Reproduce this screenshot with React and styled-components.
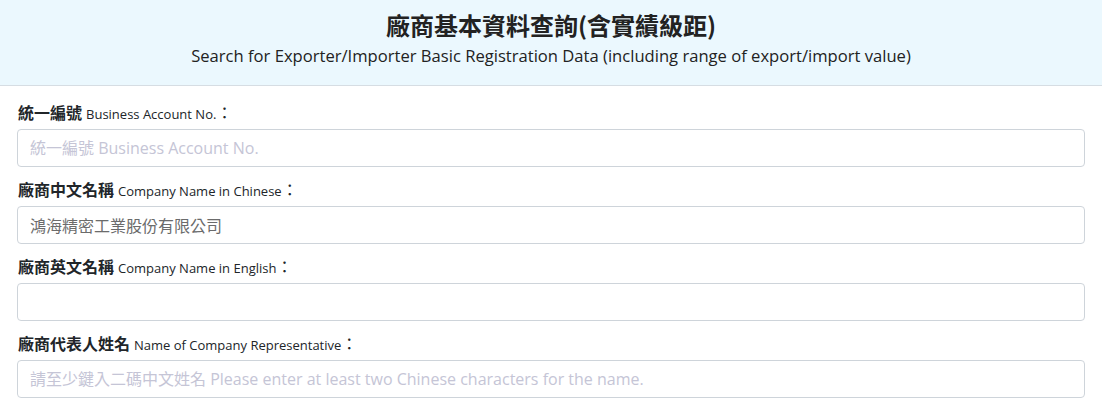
import React from "react";
import styled, { createGlobalStyle } from "styled-components";

const GlobalStyle = createGlobalStyle`
  body {
    margin: 0;
    background: #ffffff;
    font-family: "Open Sans", "Noto Sans CJK TC", sans-serif;
    color: #212529;
  }
`;

const fields = [
  { zh: "統一編號", en: "Business Account No.", placeholder: "統一編號 Business Account No.", value: "" },
  { zh: "廠商中文名稱", en: "Company Name in Chinese", placeholder: "", value: "鴻海精密工業股份有限公司" },
  { zh: "廠商英文名稱", en: "Company Name in English", placeholder: "", value: "" },
  {
    zh: "廠商代表人姓名",
    en: "Name of Company Representative",
    placeholder: "請至少鍵入二碼中文姓名 Please enter at least two Chinese characters for the name.",
    value: "",
  },
];

const App = () => {
  return (
    <Page>
      <GlobalStyle />
      <Header>
        <Title>廠商基本資料查詢(含實績級距)</Title>
        <Subtitle>
          Search for Exporter/Importer Basic Registration Data (including range of export/import value)
        </Subtitle>
      </Header>
      <Form>
        {fields.map((f) => (
          <Field key={f.zh}>
            <Label>
              <LabelZh>{f.zh}</LabelZh>
              <LabelEn>{f.en}</LabelEn>
              <Colon>：</Colon>
            </Label>
            <Input placeholder={f.placeholder} defaultValue={f.value} />
          </Field>
        ))}
      </Form>
    </Page>
  );
};

const Page = styled.div`
  width: 1102px;
`;

const Header = styled.div`
  background-color: #ebf8fe;
  border-bottom: 1px solid #d6dde3;
  height: 86px;
  box-sizing: border-box;
  display: flex;
  flex-direction: column;
  align-items: center;
  padding-top: 9px;
`;

const Title = styled.h1`
  margin: 0;
  font-family: "Noto Sans CJK TC", sans-serif;
  font-size: 24px;
  font-weight: 700;
  line-height: 32px;
  color: #222222;
`;

const Subtitle = styled.div`
  margin-top: 2px;
  font-family: "Open Sans", "Noto Sans CJK TC", sans-serif;
  font-size: 16.6px;
  line-height: 26px;
  color: #222222;
`;

const Form = styled.div`
  padding: 16px 17px 0 17px;
  width: 1102px;
  box-sizing: border-box;
  display: flex;
  flex-direction: column;
  gap: 12px;
`;

const Field = styled.div`
  display: flex;
  flex-direction: column;
  gap: 7px;
`;

const Label = styled.div`
  display: flex;
  align-items: baseline;
  height: 20px;
  font-family: "Noto Sans CJK TC", sans-serif;
  font-size: 16px;
  line-height: 20px;
  color: #212529;
  padding-left: 1px;
`;

const LabelZh = styled.span`
  font-weight: 600;
`;

const LabelEn = styled.span`
  margin-left: 4px;
  font-family: "Open Sans", sans-serif;
  font-size: 13px;
  line-height: 20px;
`;

const Colon = styled.span`
  font-weight: 400;
`;

const Input = styled.input`
  box-sizing: border-box;
  width: 100%;
  height: 38px;
  border: 1px solid #ced4da;
  border-radius: 4px;
  padding: 0 12px;
  font-family: "Open Sans", "Noto Sans CJK TC", sans-serif;
  font-size: 16px;
  color: #6b6b6b;
  background: #ffffff;
  outline: none;

  &::placeholder {
    color: #c5c5d6;
  }
`;

export default App;
